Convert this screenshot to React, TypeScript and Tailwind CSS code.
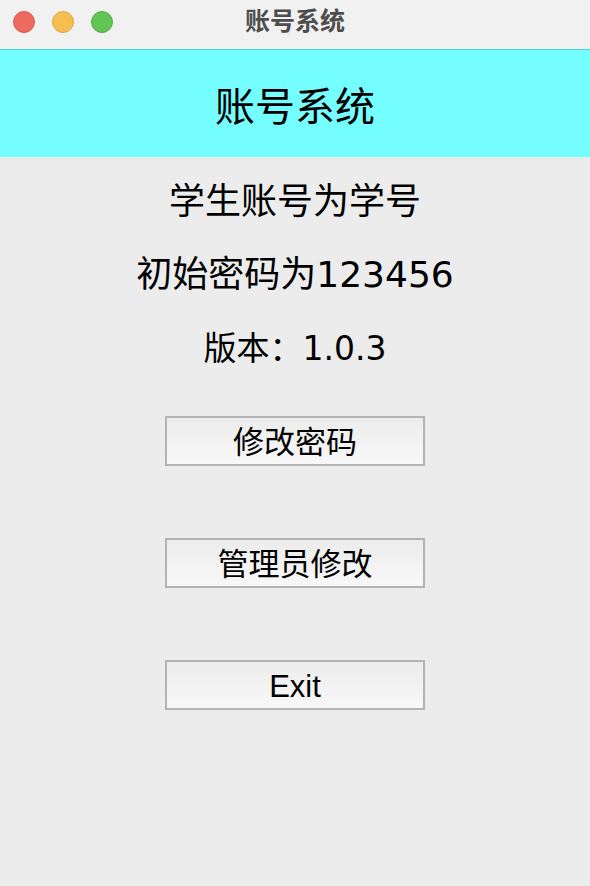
import React from 'react'

const font = { fontFamily: '"DejaVu Sans", "Noto Sans CJK SC", sans-serif' }

// Window controls
const TrafficLights: React.FC = () => (
  <div className="flex items-center gap-[17px] pl-[13px] pt-[11px]">
    <span className="w-[22px] h-[22px] rounded-full bg-[#ee6a5f] border border-[#d9574d]" />
    <span className="w-[22px] h-[22px] rounded-full bg-[#f6be4f] border border-[#dea53a]" />
    <span className="w-[22px] h-[22px] rounded-full bg-[#61c454] border border-[#4eaa41]" />
  </div>
)

const MacButton: React.FC<{ label: string }> = ({ label }) => (
  <button
    className="w-[260px] h-[50px] border-2 border-[#b3b3b3] bg-gradient-to-b from-[#ececec] to-[#f8f8f8] text-[31px] leading-none text-black flex items-center justify-center pt-[2px]"
    style={{ fontFamily: '"Liberation Sans", "Noto Sans CJK SC", sans-serif' }}
  >
    {label}
  </button>
)

export default function App() {
  return (
    <div className="w-[590px] h-[886px] bg-[#ececec] flex flex-col" style={font}>
      {/* Title bar */}
      <div className="relative h-[50px] bg-[#f1f1f1] border-b border-[#4fd0d2] flex items-start">
        <TrafficLights />
        <div className="absolute inset-x-0 top-0 h-[44px] flex items-center justify-center text-[25px] font-bold text-[#4d4d4d]">
          账号系统
        </div>
      </div>

      {/* Header */}
      <div className="h-[107px] bg-[#74feff] flex items-center justify-center pt-[7px] text-[40px] text-black">
        账号系统
      </div>

      {/* Info */}
      <div className="flex flex-col items-center text-black">
        <div className="mt-[23px] h-[44px] flex items-center text-[36px]">学生账号为学号</div>
        <div className="mt-[29px] h-[44px] flex items-center text-[36px]">初始密码为123456</div>
        <div className="mt-[32px] h-[40px] flex items-center text-[33px]">版本：1.0.3</div>
      </div>

      {/* Actions */}
      <div className="flex flex-col items-center gap-[72px] mt-[47px]">
        <MacButton label="修改密码" />
        <MacButton label="管理员修改" />
        <MacButton label="Exit" />
      </div>
    </div>
  )
}
